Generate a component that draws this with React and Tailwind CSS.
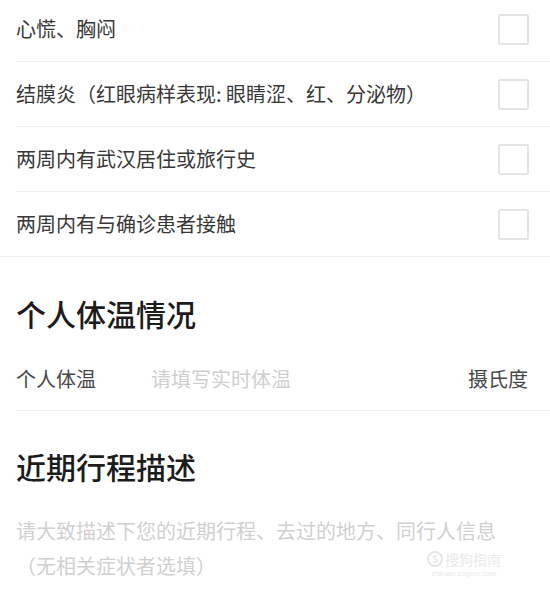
import React from 'react'

const font = { fontFamily: '"Noto Sans CJK SC", "Noto Sans", sans-serif' }

const symptoms = [
  '心慌、胸闷',
  '结膜炎（红眼病样表现: 眼睛涩、红、分泌物）',
  '两周内有武汉居住或旅行史',
  '两周内有与确诊患者接触',
]

const SymptomRow = ({ label, last }) => (
  <div className={'flex h-[65px] items-center justify-between border-b border-[#efefef] ' + (last ? '' : 'ml-[16px]')}>
    <span className={'text-[20px] text-[#383838] ' + (last ? 'pl-[16px]' : '')}>{label}</span>
    <div className="mr-[21px] h-[31px] w-[31px] rounded-[2px] border-2 border-[#e4e4e4] bg-white" />
  </div>
)

const App = () => {
  return (
    <div className="relative h-[600px] w-[550px] overflow-hidden bg-white" style={font}>
      <div className="mt-[-3px]">
        {symptoms.map((s, i) => (
          <SymptomRow key={s} label={s} last={i === symptoms.length - 1} />
        ))}
      </div>

      {/* 体温 */}
      <div className="pl-[16px]">
        <div className="mt-[36px] h-[40px] text-[30px] font-medium leading-[40px] text-[#1c1c1c]">个人体温情况</div>
        <div className="mt-[14px] flex h-[64px] items-center border-b border-[#efefef] pr-[22px] text-[20px]">
          <span className="w-[135px] text-[#484848]">个人体温</span>
          <span className="flex-1 text-[#cfcfcf]">请填写实时体温</span>
          <span className="text-[#484848]">摄氏度</span>
        </div>
      </div>

      {/* 行程 */}
      <div className="pl-[16px] pr-[16px]">
        <div className="mt-[35px] h-[40px] text-[30px] font-medium leading-[40px] text-[#1c1c1c]">近期行程描述</div>
        <div className="mt-[27px] text-[20px] leading-[35px] text-[#d0d0d0]">
          <div>请大致描述下您的近期行程、去过的地方、同行人信息</div>
          <div>（无相关症状者选填）</div>
        </div>
      </div>

      {/* watermark */}
      <div className="absolute left-[427px] top-[550px] flex w-[74px] flex-col items-center text-[#e9e9e9]">
        <div className="flex items-center gap-[2px]">
          <div className="flex h-[16px] w-[16px] items-center justify-center rounded-full border-2 border-[#e6e6e6] text-[10px] font-bold leading-none">S</div>
          <span className="text-[14px] leading-[18px]">搜狗指南</span>
        </div>
        <span className="text-[8px] leading-[12px]" style={{ fontFamily: '"Liberation Sans", sans-serif' }}>zhinan.sogou.com</span>
      </div>
    </div>
  )
}

export default App
